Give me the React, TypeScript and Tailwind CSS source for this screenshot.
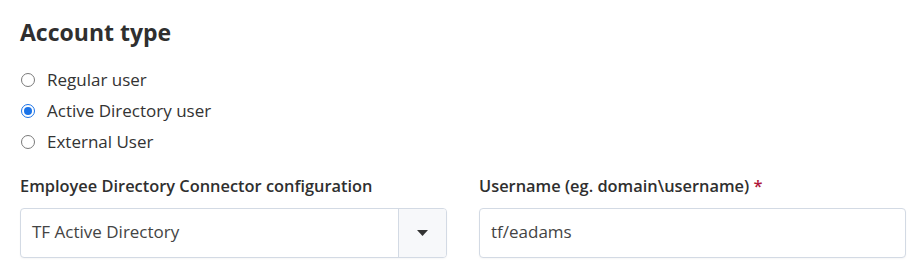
import React from "react";

function Radio({ checked, label }: { checked?: boolean; label: string }) {
  return (
    <label className="flex h-[31px] items-center">
      <span
        className={
          checked
            ? "ml-[1px] flex h-[14px] w-[14px] items-center justify-center rounded-full border-[1.5px] border-[#1a73e8] bg-white"
            : "ml-[1px] flex h-[14px] w-[14px] items-center justify-center rounded-full border-[1.5px] border-[#7a7a7a] bg-white"
        }
      >
        {checked && <span className="h-[8px] w-[8px] rounded-full bg-[#1a73e8]" />}
      </span>
      <span className="ml-[12px] text-[17px] text-[#333]">{label}</span>
    </label>
  );
}

export default function App() {
  return (
    <div
      className="w-[923px] h-[273px] bg-white pl-[20px] pr-[17px] pt-[16px]"
      style={{ fontFamily: '"Open Sans", "Noto Sans", sans-serif' }}
    >
      <h2 className="text-[23px] font-bold leading-[32px] text-[#2f2f2f]">Account type</h2>
      <div className="mt-[16px] flex flex-col">
        <Radio label="Regular user" />
        <Radio checked label="Active Directory user" />
        <Radio label="External User" />
      </div>
      <div className="mt-[17px] grid grid-cols-2 gap-[32px]">
        <div>
          <div className="text-[16.4px] font-semibold leading-[24px] text-[#2f2f2f]">
            Employee Directory Connector configuration
          </div>
          <div className="mt-[10px] flex h-[50px] overflow-hidden rounded-[4px] border border-[#d3dae4] bg-white shadow-[0_1px_2px_rgba(0,0,0,0.04)]">
            <div className="flex flex-1 items-center pb-[2px] pl-[11px] text-[17px] text-[#444]">TF Active Directory</div>
            <div className="flex w-[48px] items-center justify-center border-l border-[#d3dae4] bg-[#f7f8fa]">
              <svg width="11" height="6" viewBox="0 0 11 6">
                <path d="M0 0 L11 0 L5.5 6 Z" fill="#333" />
              </svg>
            </div>
          </div>
        </div>
        <div>
          <div className="text-[16.4px] font-semibold leading-[24px] text-[#2f2f2f]">
            Username (eg. domain\username) <span className="text-[#b0173a]">*</span>
          </div>
          <div className="mt-[10px] flex h-[50px] items-center rounded-[4px] border border-[#d3dae4] bg-white pb-[2px] pl-[11px] text-[17px] text-[#444] shadow-[0_1px_2px_rgba(0,0,0,0.04)]">
            tf/eadams
          </div>
        </div>
      </div>
    </div>
  );
}
